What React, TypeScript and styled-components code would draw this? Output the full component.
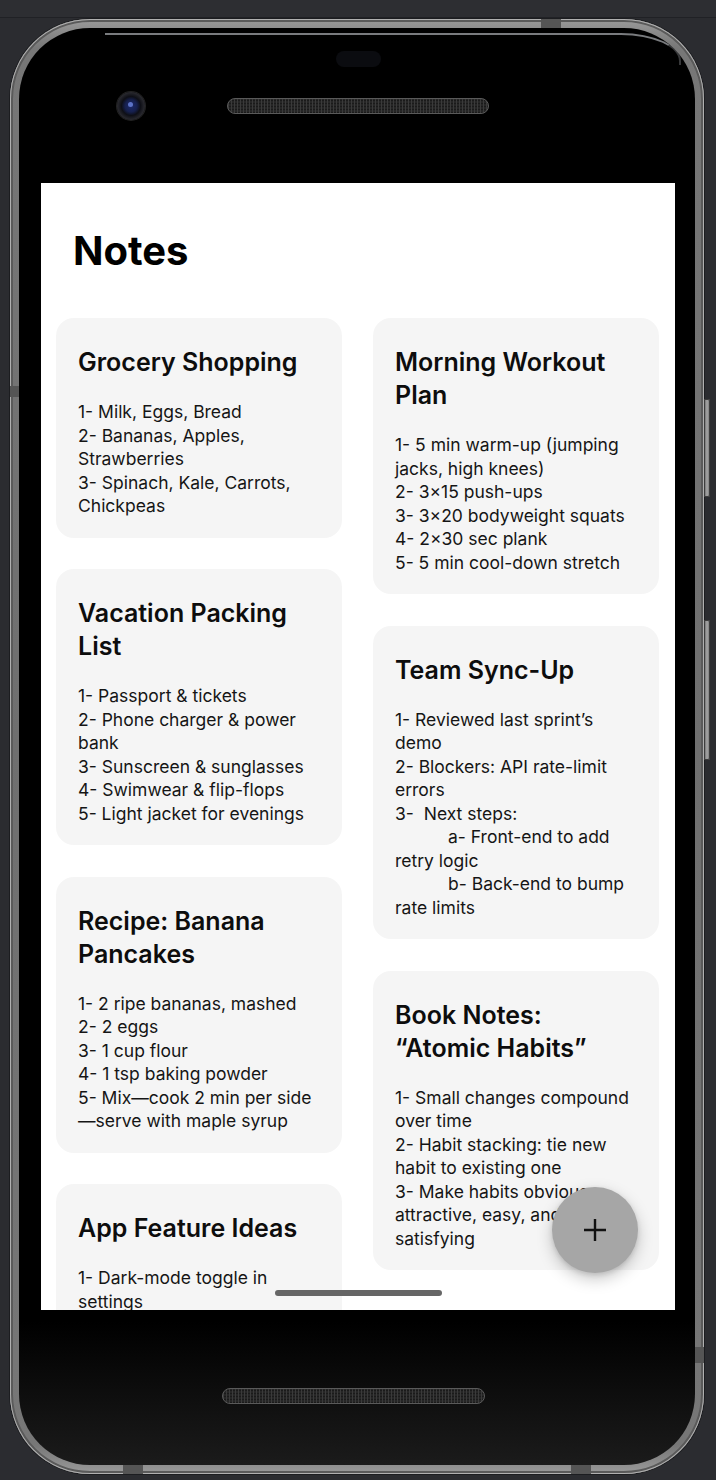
import React from "react";
import styled, { createGlobalStyle } from "styled-components";

const GlobalStyle = createGlobalStyle`
  html, body { margin: 0; padding: 0; background: #2b2c30; }
  body { font-family: Inter, "Noto Sans", sans-serif; -webkit-font-smoothing: antialiased; }
  * { box-sizing: border-box; }
`;

const Page = styled.div`
  width: 716px;
  height: 1480px;
  background: #2b2c30;
  overflow: hidden;
`;

const TopStrip = styled.div`
  height: 18px;
  background: #2d2e32;
  border-bottom: 1px solid #202125;
`;

const Phone = styled.div`
  position: relative;
  margin: 1px 0 0 10px;
  width: 694px;
  height: 1455px;
  padding: 9px;
  border-radius: 80px;
  background: linear-gradient(180deg, #9a9a9a 0%, #777 2%, #6f6f6f 50%, #777 98%, #9a9a9a 100%);
  box-shadow: inset 0 0 0 1px #b0b0b0, inset 0 0 0 3px #5a5a5a, 0 0 0 1px #1c1d20;
`;

const SideButton = styled.div<{ $top: number; $height: number }>`
  position: absolute;
  right: -6px;
  top: ${(p) => p.$top}px;
  width: 6px;
  height: ${(p) => p.$height}px;
  border-radius: 0 2px 2px 0;
  background: linear-gradient(90deg, #5c5c5c, #a8a8a8 50%, #6c6c6c);
  box-shadow: inset 0 0 0 1px #3d3d3d;
`;

const Band = styled.div<{ $x?: number; $y?: number; $side?: "top" | "bottom" | "left" | "right" }>`
  position: absolute;
  background: #555;
  ${(p) =>
    p.$side === "top"
      ? `top: 0; left: ${p.$x}px; width: 20px; height: 9px;`
      : p.$side === "bottom"
      ? `bottom: 0; left: ${p.$x}px; width: 20px; height: 9px;`
      : p.$side === "left"
      ? `left: 0; top: ${p.$y}px; width: 9px; height: 11px;`
      : `right: 0; top: ${p.$y}px; width: 9px; height: 16px;`}
`;

const Body = styled.div`
  position: relative;
  height: 100%;
  border-radius: 71px;
  background: linear-gradient(180deg, #000 0%, #000 90%, #1b1b1b 100%);
  display: flex;
  flex-direction: column;
  padding: 0 20px 0 22px;
  overflow: hidden;
  &::before {
    content: "";
    position: absolute;
    top: 5px;
    left: 86px;
    right: 14px;
    height: 30px;
    border-top: 2px solid rgba(220, 225, 230, 0.55);
    border-right: 2px solid rgba(220, 225, 230, 0.25);
    border-top-right-radius: 60px 28px;
    pointer-events: none;
  }
`;

const TopBezel = styled.div`
  height: 155px;
  flex-shrink: 0;
  display: flex;
  flex-direction: column;
  padding-top: 23px;
`;

const Sensor = styled.div`
  align-self: center;
  width: 45px;
  height: 16px;
  border-radius: 8px;
  background: #0b0c10;
`;

const CameraRow = styled.div`
  display: flex;
  align-items: center;
  margin-top: 25px;
  padding-left: 76px;
  gap: 82px;
`;

const Camera = styled.div`
  width: 28px;
  height: 28px;
  border-radius: 50%;
  background: radial-gradient(circle at 50% 50%, #1d2a6a 0%, #16204e 30%, #0e0f16 48%, #2a2a30 70%, #121216 100%);
  box-shadow: 0 0 0 1px #222;
  position: relative;
  &::after {
    content: "";
    position: absolute;
    left: 11px;
    top: 10px;
    width: 5px;
    height: 5px;
    border-radius: 50%;
    background: #6d86e0;
    opacity: 0.8;
  }
`;

const Speaker = styled.div<{ $width: number }>`
  width: ${(p) => p.$width}px;
  height: 16px;
  border-radius: 8px;
  border: 1px solid #5a5a5a;
  background-color: #262626;
  background-image: repeating-linear-gradient(90deg, #3a3a3a 0 1px, transparent 1px 3px),
    repeating-linear-gradient(0deg, #1a1a1a 0 1px, transparent 1px 3px);
`;

const Screen = styled.div`
  position: relative;
  height: 1127px;
  flex-shrink: 0;
  background: #fff;
  overflow: hidden;
`;

const Content = styled.div`
  padding: 44px 16px 0 15px;
`;

const Heading = styled.h1`
  margin: 0 0 43px 17px;
  font: 700 40px/48px Inter, "Noto Sans", sans-serif;
  color: #000;
`;

const Columns = styled.div`
  display: flex;
  align-items: flex-start;
  gap: 31px;
`;

const Column = styled.div`
  flex: 1;
  min-width: 0;
  display: flex;
  flex-direction: column;
  gap: 31.5px;
`;

const Card = styled.article`
  background: #f5f5f5;
  border-radius: 18px;
  padding: 28px 22px 20px;
`;

const CardTitle = styled.h2`
  margin: 0 0 21px;
  font: 600 25px/33px Inter, "Noto Sans", sans-serif;
  color: #0d0d0d;
`;

const CardBody = styled.div`
  font: 400 17.5px/23.5px Inter, "Noto Sans", sans-serif;
  color: #151515;
  white-space: pre-wrap;
`;

const Line = styled.span`
  display: block;
`;

const Indent = styled.span`
  display: inline-block;
  width: 53px;
`;

const Fab = styled.button`
  position: absolute;
  right: 37px;
  bottom: 37px;
  width: 86px;
  height: 86px;
  border: none;
  border-radius: 50%;
  background: #a6a6a6;
  box-shadow: 0 6px 16px rgba(0, 0, 0, 0.22), 0 2px 5px rgba(0, 0, 0, 0.12);
  display: flex;
  align-items: center;
  justify-content: center;
  padding: 0;
`;

const HomeIndicator = styled.div`
  position: absolute;
  left: 50%;
  bottom: 14px;
  width: 167px;
  height: 6px;
  margin-left: -83px;
  border-radius: 3px;
  background: #666;
`;

const BottomBezel = styled.div`
  height: 155px;
  flex-shrink: 0;
  display: flex;
  flex-direction: column;
  padding: 78px 0 0 181px;
`;

type Note = { title: string; lines: React.ReactNode[] };

const left: Note[] = [
  {
    title: "Grocery Shopping",
    lines: ["1- Milk, Eggs, Bread", "2- Bananas, Apples, Strawberries", "3- Spinach, Kale, Carrots, Chickpeas"],
  },
  {
    title: "Vacation Packing List",
    lines: [
      "1- Passport & tickets",
      "2- Phone charger & power bank",
      "3- Sunscreen & sunglasses",
      "4- Swimwear & flip-flops",
      "5- Light jacket for evenings",
    ],
  },
  {
    title: "Recipe: Banana Pancakes",
    lines: [
      "1- 2 ripe bananas, mashed",
      "2- 2 eggs",
      "3- 1 cup flour",
      "4- 1 tsp baking powder",
      "5- Mix\u2014cook 2 min per side \u2014serve with maple syrup",
    ],
  },
  {
    title: "App Feature Ideas",
    lines: ["1- Dark-mode toggle in settings"],
  },
];

const right: Note[] = [
  {
    title: "Morning Workout Plan",
    lines: [
      "1- 5 min warm-up (jumping jacks, high knees)",
      "2- 3\u00d715 push-ups",
      "3- 3\u00d720 bodyweight squats",
      "4- 2\u00d730 sec plank",
      "5- 5 min cool-down stretch",
    ],
  },
  {
    title: "Team Sync-Up",
    lines: [
      "1- Reviewed last sprint\u2019s demo",
      "2- Blockers: API rate-limit errors",
      "3-  Next steps:",
      <>
        <Indent />a- Front-end to add retry logic
      </>,
      <>
        <Indent />b- Back-end to bump rate limits
      </>,
    ],
  },
  {
    title: "Book Notes: \u201cAtomic Habits\u201d",
    lines: [
      "1- Small changes compound over time",
      "2- Habit stacking: tie new habit to existing one",
      "3- Make habits obvious, attractive, easy, and satisfying",
    ],
  },
];

const NoteCard = ({ note }: { note: Note }) => (
  <Card>
    <CardTitle>{note.title}</CardTitle>
    <CardBody>
      {note.lines.map((l, i) => (
        <Line key={i}>{l}</Line>
      ))}
    </CardBody>
  </Card>
);

export default function App() {
  return (
    <Page>
      <GlobalStyle />
      <TopStrip />
      <Phone>
        <Band $side="top" $x={531} />
        <Band $side="bottom" $x={113} />
        <Band $side="bottom" $x={561} />
        <Band $side="left" $y={367} />
        <Band $side="right" $y={1328} />
        <SideButton $top={380} $height={98} />
        <SideButton $top={601} $height={140} />
        <Body>
          <TopBezel>
            <Sensor />
            <CameraRow>
              <Camera />
              <Speaker $width={262} />
            </CameraRow>
          </TopBezel>
          <Screen>
            <Content>
              <Heading>Notes</Heading>
              <Columns>
                <Column>
                  {left.map((n) => (
                    <NoteCard key={n.title} note={n} />
                  ))}
                </Column>
                <Column>
                  {right.map((n) => (
                    <NoteCard key={n.title} note={n} />
                  ))}
                </Column>
              </Columns>
            </Content>
            <HomeIndicator />
            <Fab aria-label="Add note">
              <svg width="24" height="24" viewBox="0 0 24 24" fill="none">
                <path d="M12 1v22M1 12h22" stroke="#111" strokeWidth="2.4" strokeLinecap="butt" />
              </svg>
            </Fab>
          </Screen>
          <BottomBezel>
            <Speaker $width={263} />
          </BottomBezel>
        </Body>
      </Phone>
    </Page>
  );
}
